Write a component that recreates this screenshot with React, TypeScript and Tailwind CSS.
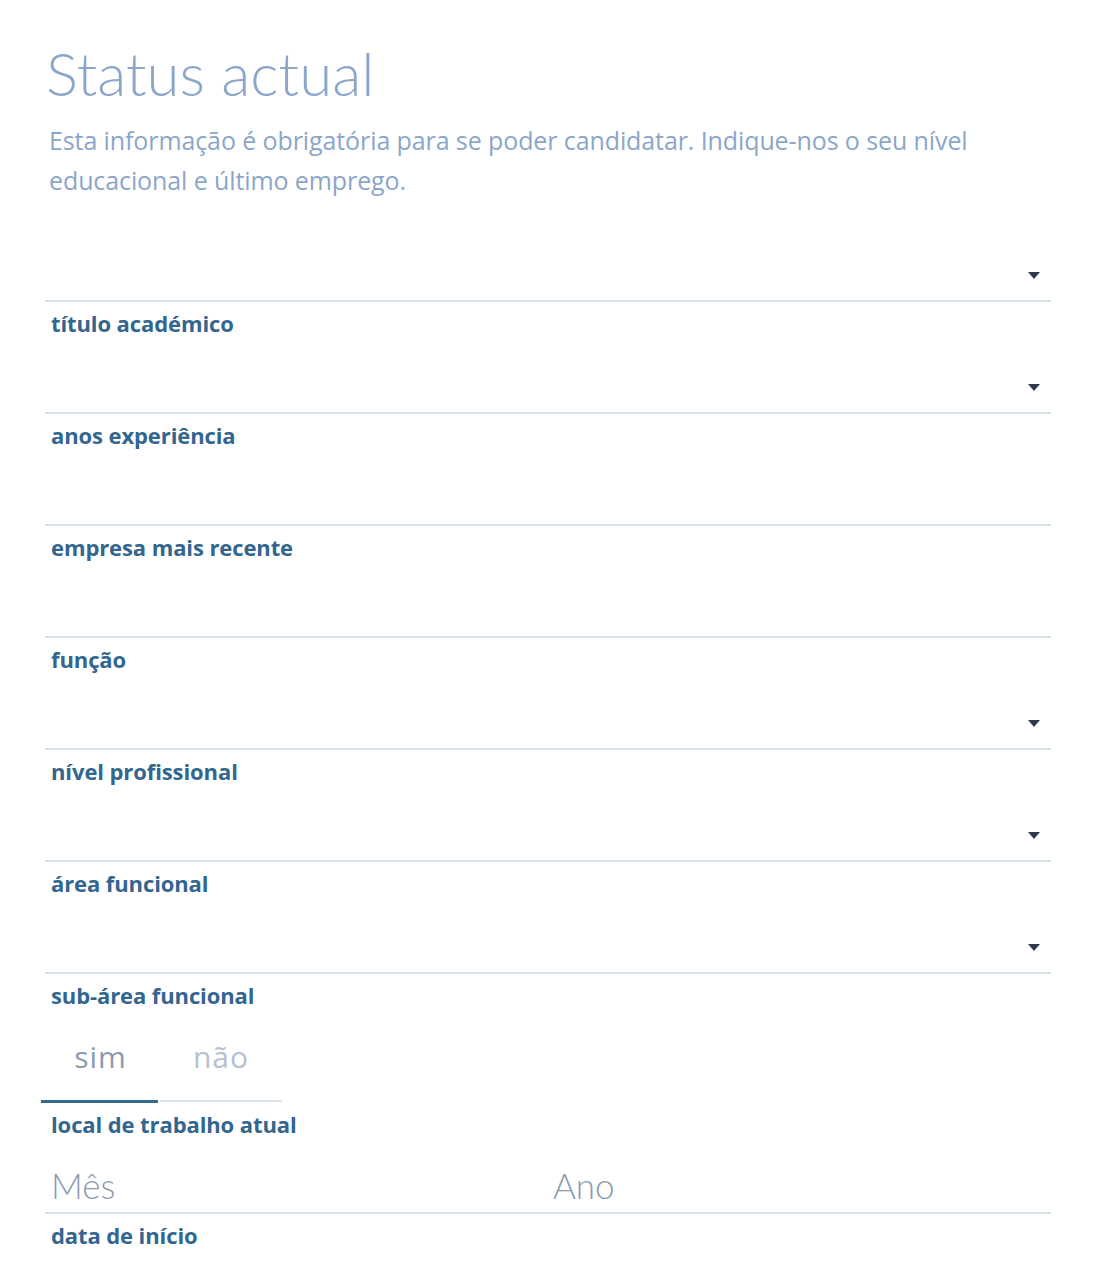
type Field = {
  label: string;
  select?: boolean;
};

const fields: Field[] = [
  { label: "título académico", select: true },
  { label: "anos experiência", select: true },
  { label: "empresa mais recente" },
  { label: "função" },
  { label: "nível profissional", select: true },
  { label: "área funcional", select: true },
  { label: "sub-área funcional", select: true },
];

function Caret() {
  return (
    <svg width="12" height="7" viewBox="0 0 12 7" className="mr-[11px] mb-[21px]">
      <path d="M0 0 H12 L6 7 Z" fill="#2b3a4f" />
    </svg>
  );
}

function Label({ children }: { children: React.ReactNode }) {
  return (
    <div className="flex h-[40px] items-center pl-[6px] pt-[2px] font-['Open_Sans',sans-serif] text-[22px] font-bold tracking-[-0.1px] text-[#33668f]">
      {children}
    </div>
  );
}

function FieldRow({ label, select }: Field) {
  return (
    <div>
      <div className="flex h-[72px] items-end justify-end border-b-2 border-[#d6e2e7]">
        {select && <Caret />}
      </div>
      <Label>{label}</Label>
    </div>
  );
}

export default function App() {
  return (
    <div className="min-h-[1284px] bg-white font-['Lato',sans-serif]">
      <div className="w-[1051px] pl-[45px] pt-[37px]">
        <h1 className="pl-[1px] text-[60px] font-light leading-[72px] text-[#8ba6c9]">
          Status actual
        </h1>
        <p className="mt-[11px] pl-[4px] font-['Open_Sans',sans-serif] text-[25px] leading-[40px] tracking-[-0.1px] text-[#8ba6c9]">
          Esta informação é obrigatória para se poder candidatar. Indique-nos o seu nível
          educacional e último emprego.
        </p>

        <div className="mt-[30px]">
          {fields.map((f) => (
            <FieldRow key={f.label} {...f} />
          ))}
        </div>

        <div>
          <div className="flex h-[89px]">
            <div className="-ml-[4px] flex w-[117px] justify-center border-b-[3px] border-[#336a91] pl-[2px] pt-[23px] font-['Open_Sans',sans-serif] text-[30px] leading-[40px] tracking-[1px] text-[#8a9bb0]">
              sim
            </div>
            <div className="ml-[2px] mb-[1px] flex w-[122px] justify-center border-b-2 border-[#d6e2e7] pt-[23px] font-['Open_Sans',sans-serif] text-[30px] leading-[40px] tracking-[1px] text-[#b4c1cf]">
              não
            </div>
          </div>
          <Label>local de trabalho atual</Label>
        </div>

        <div>
          <div className="flex h-[71px] items-end border-b-2 border-[#d6e2e7] pb-[1px] text-[35px] font-light text-[#8a9bb0]">
            <div className="w-[503px] pl-[6px]">Mês</div>
            <div className="pl-[5px]">Ano</div>
          </div>
          <Label>data de início</Label>
        </div>
      </div>
    </div>
  );
}
